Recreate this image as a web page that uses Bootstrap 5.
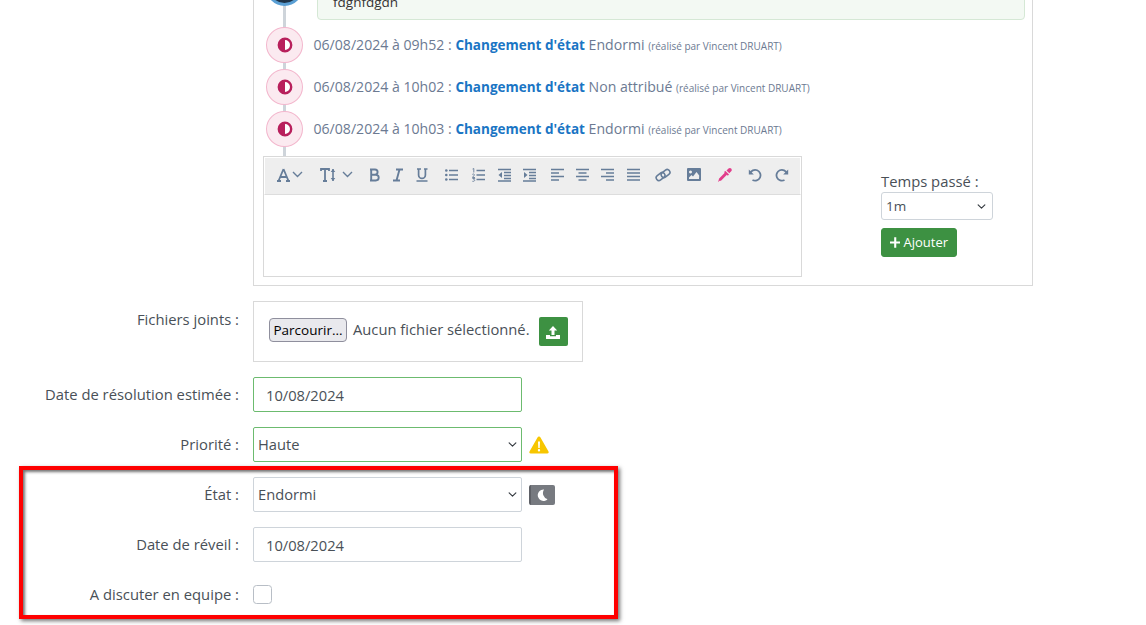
<!DOCTYPE html>
<html lang="fr"><head><meta charset="utf-8"><title>Ticket</title>
<link href="https://cdn.jsdelivr.net/npm/bootstrap@5.3.0/dist/css/bootstrap.min.css" rel="stylesheet">
<style>
html,body{height:625px;overflow:hidden;background:#fff}
body{font-family:"Open Sans",sans-serif;font-size:14px;color:#495057;position:relative}
.pg{width:1033px;margin-top:-44px}
.fieldwrap{margin-left:253px}
.tlbox{border:1px solid #d9d9d9;height:330px;padding:0 7px 0 9px;position:relative}
.tl{position:relative;height:199px}
.tl:before{content:"";position:absolute;left:20px;top:20px;bottom:0;width:3px;background:#ced4da}
.tl-first{display:flex;height:67px;position:relative}
.dot{width:37px;height:37px;border-radius:50%;flex:none;display:flex;align-items:center;justify-content:center;position:relative}
.dot-dark{background:#1f3347;border:3px solid #5a9fd4;margin-top:12px;margin-left:3px}
.note{margin-left:14px;width:708px;height:63px;background:#f3f9f3;border:1px solid #d5e8d5;border-radius:0 0 4px 4px;padding:34px 15px 0;color:#333;line-height:20px;font-size:13.5px}
.ev{display:flex;align-items:center;height:42px;position:relative;margin-left:3px;color:#6c7a92}
.dot-ev{width:37px;height:36px;background:#fbeaf0;border:1px solid #f3b7cd;margin-right:10.5px}
.dot-ev svg{display:block}
.ev span{font-size:14.1px}
.ev b{color:#1a75c4;font-weight:700;font-size:13.5px}
.ev small{font-size:10px}
.edrow{display:flex}
.editor{width:539px;height:121px;border:1px solid #d9d9d9;flex:none;position:relative;background:#fff}
.tbar{height:38px;background:#eee;border:1px solid #fff;border-bottom:1px solid #ddd;display:flex;align-items:center;color:#667d99}
.tbar svg{position:absolute;top:11px}
.side{margin-left:79px;padding-top:15px;color:#495057;line-height:20px;width:112px;font-size:14.8px}
.side .form-select{height:28px;margin-top:1px;padding:0 24px 0 4px;font-size:13.5px;border-radius:3px;background-position:right 5px center;background-size:11px 9px;color:#495057;border-color:#ced4da}
.btn-add{background:#3d9142;color:#fff;border:1px solid #3d9142;font-size:13px;padding:0 8px;height:29px;width:76px;margin-top:8px;border-radius:3px;line-height:25px;display:inline-flex;align-items:center;gap:3px}
.frow{display:flex;align-items:center;height:35px;margin-bottom:15px}
.lbl{width:239px;flex:none;text-align:right;margin-right:14px;color:#495057;margin-bottom:0;font-size:14.8px}
.inp{width:269px;height:35px;font-size:14.7px;border-radius:2px;color:#495057;border-color:#ced4da;flex:none}
input.inp{padding:0 12px}
select.inp{padding:0 24px 0 4px;background-position:right 3px center;background-size:11px 9px}
.ok{border-color:#6cbb6f}
.filerow{display:flex;margin-top:15px;margin-bottom:15px;height:61px}
.fbox{width:330px;height:61px;border:1px solid #d9d9d9;display:flex;align-items:center;padding-left:15px;color:#495057;font-size:14.75px}
.fname{position:relative;top:-2px}
.fbtn{font-family:"Open Sans",sans-serif;font-size:13.5px;background:#e9e9ed;border:1px solid #8f8f9d;border-radius:4px;height:24px;width:78px;padding:0;color:#000;margin-right:6px;margin-top:-3px;line-height:20px;white-space:nowrap;overflow:hidden}
.upbtn{width:29px;height:29px;background:#3d9142;border-radius:2px;margin-left:9px;display:flex;align-items:center;justify-content:center;border:0;padding:0}
.moon{width:26px;height:20px;background:#777a80;border-radius:2px;display:flex;align-items:center;justify-content:center;margin-left:7px;border-left:2px solid #5e6066}
.warn{margin-left:7px}
.cb{width:19px;height:19px;margin:0;border-radius:2px;border-color:#b8bec6}
.redbox{position:absolute;left:19px;top:466px;width:599px;height:153px;border:4px solid #fe0000;box-shadow:2px 2px 4px rgba(0,0,0,.55),inset 2px 2px 3px rgba(0,0,0,.55);pointer-events:none}
</style></head>
<body>
<div class="pg">
 <div class="fieldwrap">
  <div class="tlbox">
   <div class="tl">
    <div class="tl-first">
     <div class="dot dot-dark"></div>
     <div class="note">fdghfdgdn</div>
    </div>
    <div class="ev"><div class="dot dot-ev"><svg width="16" height="16" viewBox="0 0 16 16"><circle cx="8" cy="8" r="6.2" fill="#fff" stroke="#b8205c" stroke-width="2.4"/><path d="M8 1.8a6.2 6.2 0 0 0 0 12.4z" fill="#b8205c"/></svg></div><span>06/08/2024 à 09h52 : <b>Changement d'état</b> Endormi <small>(réalisé par Vincent DRUART)</small></span></div>
    <div class="ev"><div class="dot dot-ev"><svg width="16" height="16" viewBox="0 0 16 16"><circle cx="8" cy="8" r="6.2" fill="#fff" stroke="#b8205c" stroke-width="2.4"/><path d="M8 1.8a6.2 6.2 0 0 0 0 12.4z" fill="#b8205c"/></svg></div><span>06/08/2024 à 10h02 : <b>Changement d'état</b> Non attribué <small>(réalisé par Vincent DRUART)</small></span></div>
    <div class="ev"><div class="dot dot-ev"><svg width="16" height="16" viewBox="0 0 16 16"><circle cx="8" cy="8" r="6.2" fill="#fff" stroke="#b8205c" stroke-width="2.4"/><path d="M8 1.8a6.2 6.2 0 0 0 0 12.4z" fill="#b8205c"/></svg></div><span>06/08/2024 à 10h03 : <b>Changement d'état</b> Endormi <small>(réalisé par Vincent DRUART)</small></span></div>
   </div>
   <div class="edrow">
    <div class="editor">
     <div class="tbar" id="tb">
      <svg style="left:13px" width="13" height="14" viewBox="0 0 13 14"><path d="M6.5 1 1.5 13M6.5 1l5 12M3.3 9h6.4M0 13h4M9 13h4" fill="none" stroke="currentColor" stroke-width="1.8"/></svg>
      <svg style="left:28px;top:14px" width="11" height="7" viewBox="0 0 11 7"><path d="M1 1l4.500 4.500L10 1" fill="none" stroke="currentColor" stroke-width="1.4"/></svg>
      <svg style="left:56px" width="16" height="14" viewBox="0 0 16 14"><path d="M1 3V1h8v2M5 1v12M3 13h4" fill="none" stroke="currentColor" stroke-width="1.8"/><path d="M13 1v12" stroke="currentColor" stroke-width="1.6"/><path d="M10.700 4 13 1l2.300 3zM10.700 10 13 13l2.300-3z" fill="currentColor"/></svg>
      <svg style="left:78px;top:14px" width="11" height="7" viewBox="0 0 11 7"><path d="M1 1l4.500 4.500L10 1" fill="none" stroke="currentColor" stroke-width="1.4"/></svg>
      <svg style="left:105px" width="11" height="14" viewBox="0 0 11 14"><path d="M1 1.500h5a2.600 2.600 0 0 1 0 5.200H1.800h5a2.900 2.900 0 0 1 0 5.800H1M2.200 1.500v11" fill="none" stroke="currentColor" stroke-width="1.9"/></svg>
      <svg style="left:128px" width="11" height="14" viewBox="0 0 11 14"><path d="M4 1.500h7M1 12.500h7M7.500 1.500l-3 11" fill="none" stroke="currentColor" stroke-width="1.9"/></svg>
      <svg style="left:152px" width="12" height="14" viewBox="0 0 12 14"><path d="M1 1h4M8 1h3.500M2.600 1v6a3.400 3.400 0 0 0 6.800 0V1M.5 13h11" fill="none" stroke="currentColor" stroke-width="1.7"/></svg>
      <svg style="left:181px" width="13" height="14" viewBox="0 0 13 14"><path d="M4 2.500h9M4 7h9M4 11.500h9" stroke="currentColor" stroke-width="1.6"/><circle cx="1.300" cy="2.500" r="1.300" fill="currentColor"/><circle cx="1.300" cy="7" r="1.300" fill="currentColor"/><circle cx="1.300" cy="11.500" r="1.300" fill="currentColor"/></svg>
      <svg style="left:208px" width="13" height="14" viewBox="0 0 13 14"><path d="M4.500 2.500H13M4.500 7H13M4.500 11.500H13" stroke="currentColor" stroke-width="1.6"/><path d="M.6 1 1.800.5V4.500M.3 6.500c1-1 2.400-.4 2 .6L.4 9.500h2.600M.4 10.500h2.400l-1 1.200c1.300 0 1.300 2-1.400 1.600" fill="none" stroke="currentColor" stroke-width=".9"/></svg>
      <svg style="left:234px" width="13" height="14" viewBox="0 0 13 14"><path d="M0 1.500h13M6 4.500h7M6 7.500h7M6 10.500h7M0 13h13" stroke="currentColor" stroke-width="1.500"/><path d="M4 4 .5 7 4 10z" fill="currentColor"/></svg>
      <svg style="left:259px" width="13" height="14" viewBox="0 0 13 14"><path d="M0 1.500h13M6 4.500h7M6 7.500h7M6 10.500h7M0 13h13" stroke="currentColor" stroke-width="1.500"/><path d="M1 4l3.500 3L1 10z" fill="currentColor"/></svg>
      <svg style="left:287px" width="13" height="14" viewBox="0 0 13 14"><path d="M0 1.500h13M0 5h8M0 8.500h13M0 12h8" stroke="currentColor" stroke-width="1.700"/></svg>
      <svg style="left:312px" width="13" height="14" viewBox="0 0 13 14"><path d="M0 1.500h13M2.500 5h8M0 8.500h13M2.500 12h8" stroke="currentColor" stroke-width="1.700"/></svg>
      <svg style="left:337px" width="13" height="14" viewBox="0 0 13 14"><path d="M0 1.500h13M5 5h8M0 8.500h13M5 12h8" stroke="currentColor" stroke-width="1.700"/></svg>
      <svg style="left:363px" width="13" height="14" viewBox="0 0 13 14"><path d="M0 1.500h13M0 5h13M0 8.500h13M0 12h13" stroke="currentColor" stroke-width="1.700"/></svg>
      <svg style="left:391px" width="16" height="14" viewBox="0 0 16 14"><g fill="none" stroke="currentColor" stroke-width="1.600"><rect x=".8" y="5.800" width="9.500" height="5.500" rx="2.700" transform="rotate(-38 5.500 8.500)"/><rect x="5.800" y="2.800" width="9.500" height="5.500" rx="2.700" transform="rotate(-38 10.500 5.500)"/></g></svg>
      <svg style="left:423px" width="14" height="13" viewBox="0 0 14 13"><path fill-rule="evenodd" d="M1 0h12a1 1 0 0 1 1 1v11a1 1 0 0 1-1 1H1a1 1 0 0 1-1-1V1a1 1 0 0 1 1-1zM3.500 2.500a1.500 1.500 0 1 0 .01 0zM2 11h10l.2-3.500L9.500 4 6 8.500 4.500 7 2 9.500z" fill="currentColor"/></svg>
      <svg style="left:453px" width="15" height="15" viewBox="0 0 15 15"><path d="M8.500 3 12 6.500l-1.200 1.200-.9-.9-5.400 5.400c-.8.800-1.500.400-2.200.8l-1.100.8-.3-.3.700-1.100c.4-.7 0-1.400.8-2.200l5.400-5.400-.9-.9z" fill="#e23d8b"/><path d="M9.500 2.500 11.500.6c.8-.8 2-.8 2.700 0s.8 1.900 0 2.700L12.300 5.300z" fill="#e23d8b"/></svg>
      <svg style="left:484px" width="14" height="14" viewBox="0 0 14 14"><path d="M2 5.500A5.400 5.400 0 1 1 4.500 12" fill="none" stroke="currentColor" stroke-width="1.800"/><path d="M.8 1.500v5h5z" fill="currentColor"/></svg>
      <svg style="left:511px" width="14" height="14" viewBox="0 0 14 14"><path d="M12 5.500A5.400 5.400 0 1 0 9.500 12" fill="none" stroke="currentColor" stroke-width="1.800"/><path d="M13.200 1.500v5h-5z" fill="currentColor"/></svg>
     </div>
    </div>
    <div class="side">
     <div>Temps passé :</div>
     <select class="form-select"><option>1m</option></select>
     <button class="btn-add" type="button"><svg width="11" height="11" viewBox="0 0 11 11"><path d="M5.500 0v11M0 5.500h11" stroke="#fff" stroke-width="2.200"/></svg>Ajouter</button>
    </div>
   </div>
  </div>
 </div>
 <div class="filerow">
  <label class="lbl" style="margin-top:7px">Fichiers joints :</label>
  <div class="fbox"><button class="fbtn" type="button">Parcourir...</button><span class="fname">Aucun fichier sélectionné.</span>
   <button class="upbtn" type="button"><svg width="14" height="14" viewBox="0 0 14 14"><path d="M7 1 2.800 5.500H5.500V10h3V5.500h2.700z" fill="#fff"/><path d="M0 10h4v1.200h6V10h4v3.500a.5.5 0 0 1-.5.500H.5a.5.5 0 0 1-.5-.5z" fill="#fff"/></svg></button></div>
 </div>
 <div class="frow"><label class="lbl">Date de résolution estimée :</label><input class="form-control inp ok" value="10/08/2024"></div>
 <div class="frow"><label class="lbl">Priorité :</label><select class="form-select inp ok"><option>Haute</option></select>
  <svg class="warn" width="20" height="18" viewBox="0 0 20 18"><path d="M10 .5c.7 0 1.200.4 1.500 1l8 14c.5 1-.1 2-1.200 2H1.700c-1.100 0-1.700-1-1.200-2l8-14c.3-.6.800-1 1.500-1z" fill="#f7c600"/><path d="M9 5.500h2l-.3 6.500H9.300zM10 13a1.200 1.200 0 1 1 0 2.400A1.200 1.200 0 0 1 10 13z" fill="#fff"/></svg></div>
 <div class="frow"><label class="lbl">État :</label><select class="form-select inp"><option>Endormi</option></select>
  <div class="moon"><svg width="12" height="12" viewBox="0 0 12 12"><path d="M7 .5A5.700 5.700 0 1 0 10.500 10.200 6.500 6.500 0 0 1 7 .5z" fill="#fff"/></svg></div></div>
 <div class="frow"><label class="lbl">Date de réveil :</label><input class="form-control inp" value="10/08/2024"></div>
 <div class="frow"><label class="lbl">A discuter en equipe :</label><input class="form-check-input cb" type="checkbox"></div>
</div>
<div class="redbox"></div>
</body></html>
